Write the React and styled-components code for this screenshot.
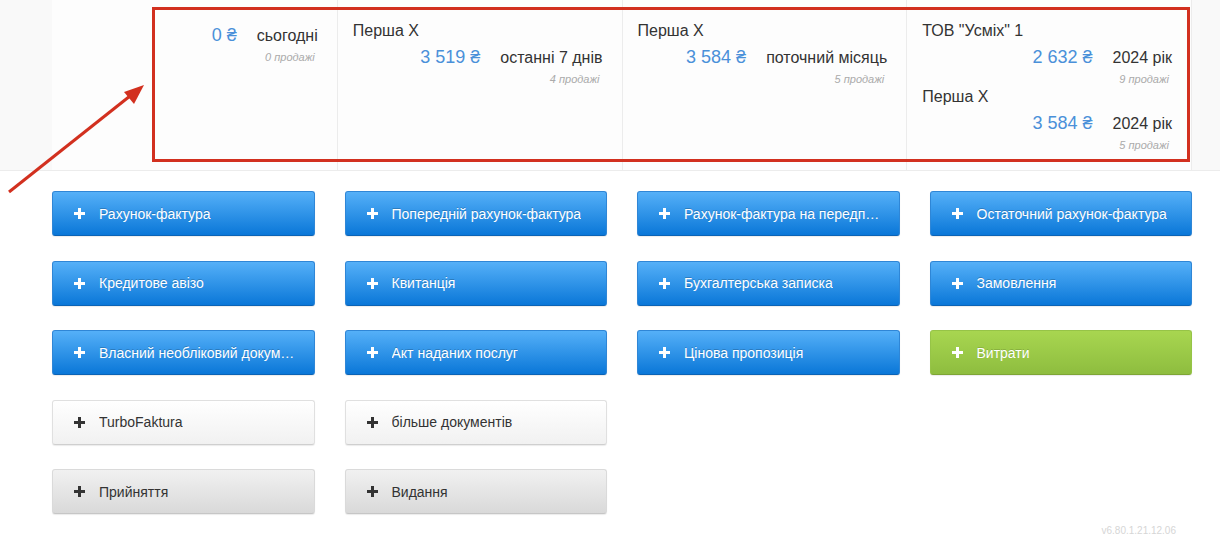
import React from 'react';
import styled, { createGlobalStyle, css } from 'styled-components';

const GlobalStyle = createGlobalStyle`
  html, body {
    margin: 0;
    padding: 0;
    background: #fff;
    font-family: "Liberation Sans", Arial, sans-serif;
    color: #333;
  }
`;

const Page = styled.div`
  position: relative;
  width: 1220px;
  height: 543px;
  overflow: hidden;
`;

const StatsBar = styled.div`
  background: #f9f9f9;
  border-bottom: 1px solid #ececec;
  padding: 0 28px 0 52px;
`;

const StatsGrid = styled.div`
  display: grid;
  grid-template-columns: repeat(4, minmax(0, 1fr));
  height: 170px;
  background: #fdfdfd;
  border-right: 1px solid #ececec;
`;

const StatColumn = styled.div`
  padding: 20px 19px 0 15px;
  border-left: ${p => (p.$first ? 'none' : '1px solid #ececec')};
  display: flex;
  flex-direction: column;
`;

const Company = styled.div`
  font-size: 16px;
  line-height: 22px;
  color: #333;
`;

const AmountRow = styled.div`
  display: flex;
  justify-content: flex-end;
  align-items: baseline;
  gap: 20px;
  margin-top: 4px;
  line-height: 22px;
`;

const Amount = styled.span`
  font-size: 18px;
  color: #4a90d9;
`;

const Period = styled.span`
  font-size: 16px;
  color: #333;
`;

const Sales = styled.div`
  text-align: right;
  font-size: 11px;
  font-style: italic;
  color: #aaa;
  line-height: 14px;
  margin-top: 3px;
  padding-right: 3px;
`;

const Buttons = styled.div`
  display: grid;
  grid-template-columns: repeat(4, minmax(0, 1fr));
  column-gap: 30px;
  row-gap: 24.5px;
  padding: 20px 28px 0 52px;
`;

const variants = {
  blue: css`
    background: linear-gradient(#55b0f8, #0a77d8);
    border: 1px solid #2f86d6;
    border-bottom-color: #0b63b5;
    color: #fff;
    text-shadow: 0 -1px 0 rgba(0, 0, 0, 0.2);
  `,
  green: css`
    background: linear-gradient(#a8d650, #8ebd3f);
    border: 1px solid #96c447;
    border-bottom-color: #7ea535;
    color: #fff;
    text-shadow: 0 -1px 0 rgba(0, 0, 0, 0.15);
  `,
  light: css`
    background: linear-gradient(#ffffff, #f1f1f1);
    border: 1px solid #e0e0e0;
    border-bottom-color: #cfcfcf;
    color: #333;
  `,
  gray: css`
    background: linear-gradient(#f1f1f1, #d9d9d9);
    border: 1px solid #dadada;
    border-bottom-color: #c6c6c6;
    color: #333;
  `,
};

const DocButton = styled.button`
  display: flex;
  align-items: center;
  gap: 14px;
  height: 45px;
  min-width: 0;
  box-sizing: border-box;
  padding: 0 18px 0 21px;
  border-radius: 3px;
  font-family: "Liberation Sans", Arial, sans-serif;
  font-size: 14px;
  text-align: left;
  cursor: pointer;
  box-shadow: 0 1px 1px rgba(0, 0, 0, 0.08);
  ${p => variants[p.$variant]}

  svg {
    flex: 0 0 auto;
  }
`;

const Label = styled.span`
  min-width: 0;
  white-space: nowrap;
  overflow: hidden;
  text-overflow: ellipsis;
`;

const Version = styled.div`
  position: absolute;
  right: 44px;
  bottom: 7px;
  font-size: 10px;
  color: #d6d6d6;
`;

const Highlight = styled.div`
  position: absolute;
  left: 152px;
  top: 7px;
  width: 1038px;
  height: 155px;
  box-sizing: border-box;
  border: 3px solid #d2301f;
  pointer-events: none;
`;

const Arrow = styled.svg`
  position: absolute;
  left: 0;
  top: 0;
  pointer-events: none;
`;

const Plus = ({ color }) => (
  <svg width="11" height="11" viewBox="0 0 11 11">
    <rect x="4" y="0" width="3" height="11" fill={color} />
    <rect x="0" y="4" width="11" height="3" fill={color} />
  </svg>
);

const stats = [
  { groups: [{ amount: '0 ₴', period: 'сьогодні', sales: '0 продажі' }] },
  { groups: [{ company: 'Перша Х', amount: '3 519 ₴', period: 'останні 7 днів', sales: '4 продажі' }] },
  { groups: [{ company: 'Перша Х', amount: '3 584 ₴', period: 'поточний місяць', sales: '5 продажі' }] },
  {
    groups: [
      { company: 'ТОВ "Усміх" 1', amount: '2 632 ₴', period: '2024 рік', sales: '9 продажі' },
      { company: 'Перша Х', amount: '3 584 ₴', period: '2024 рік', sales: '5 продажі' },
    ],
  },
];

const buttons = [
  ['Рахунок-фактура', 'blue'],
  ['Попередній рахунок-фактура', 'blue'],
  ['Рахунок-фактура на передплату', 'blue'],
  ['Остаточний рахунок-фактура', 'blue'],
  ['Кредитове авізо', 'blue'],
  ['Квитанція', 'blue'],
  ['Бухгалтерська записка', 'blue'],
  ['Замовлення', 'blue'],
  ['Власний необліковий документ', 'blue'],
  ['Акт наданих послуг', 'blue'],
  ['Цінова пропозиція', 'blue'],
  ['Витрати', 'green'],
  ['TurboFaktura', 'light'],
  ['більше документів', 'light'],
  null,
  null,
  ['Прийняття', 'gray'],
  ['Видання', 'gray'],
];

export default function App() {
  return (
    <Page>
      <GlobalStyle />
      <StatsBar>
        <StatsGrid>
          {stats.map((col, i) => (
            <StatColumn key={i} $first={i === 0}>
              {col.groups.map((g, j) => (
                <React.Fragment key={j}>
                  {g.company && <Company>{g.company}</Company>}
                  <AmountRow>
                    <Amount>{g.amount}</Amount>
                    <Period>{g.period}</Period>
                  </AmountRow>
                  <Sales>{g.sales}</Sales>
                </React.Fragment>
              ))}
            </StatColumn>
          ))}
        </StatsGrid>
      </StatsBar>

      <Buttons>
        {buttons.map((b, i) =>
          b ? (
            <DocButton key={i} $variant={b[1]}>
              <Plus color={b[1] === 'blue' || b[1] === 'green' ? '#fff' : '#333'} />
              <Label>{b[0]}</Label>
            </DocButton>
          ) : (
            <div key={i} />
          )
        )}
      </Buttons>

      <Version>v6.80.1.21.12.06</Version>

      <Highlight />
      <Arrow width="160" height="200" viewBox="0 0 160 200">
        <line x1="9" y1="192" x2="130" y2="96" stroke="#d2301f" strokeWidth="3" />
        <polygon points="144,85 124,92 134,104" fill="#d2301f" />
      </Arrow>
    </Page>
  );
}
